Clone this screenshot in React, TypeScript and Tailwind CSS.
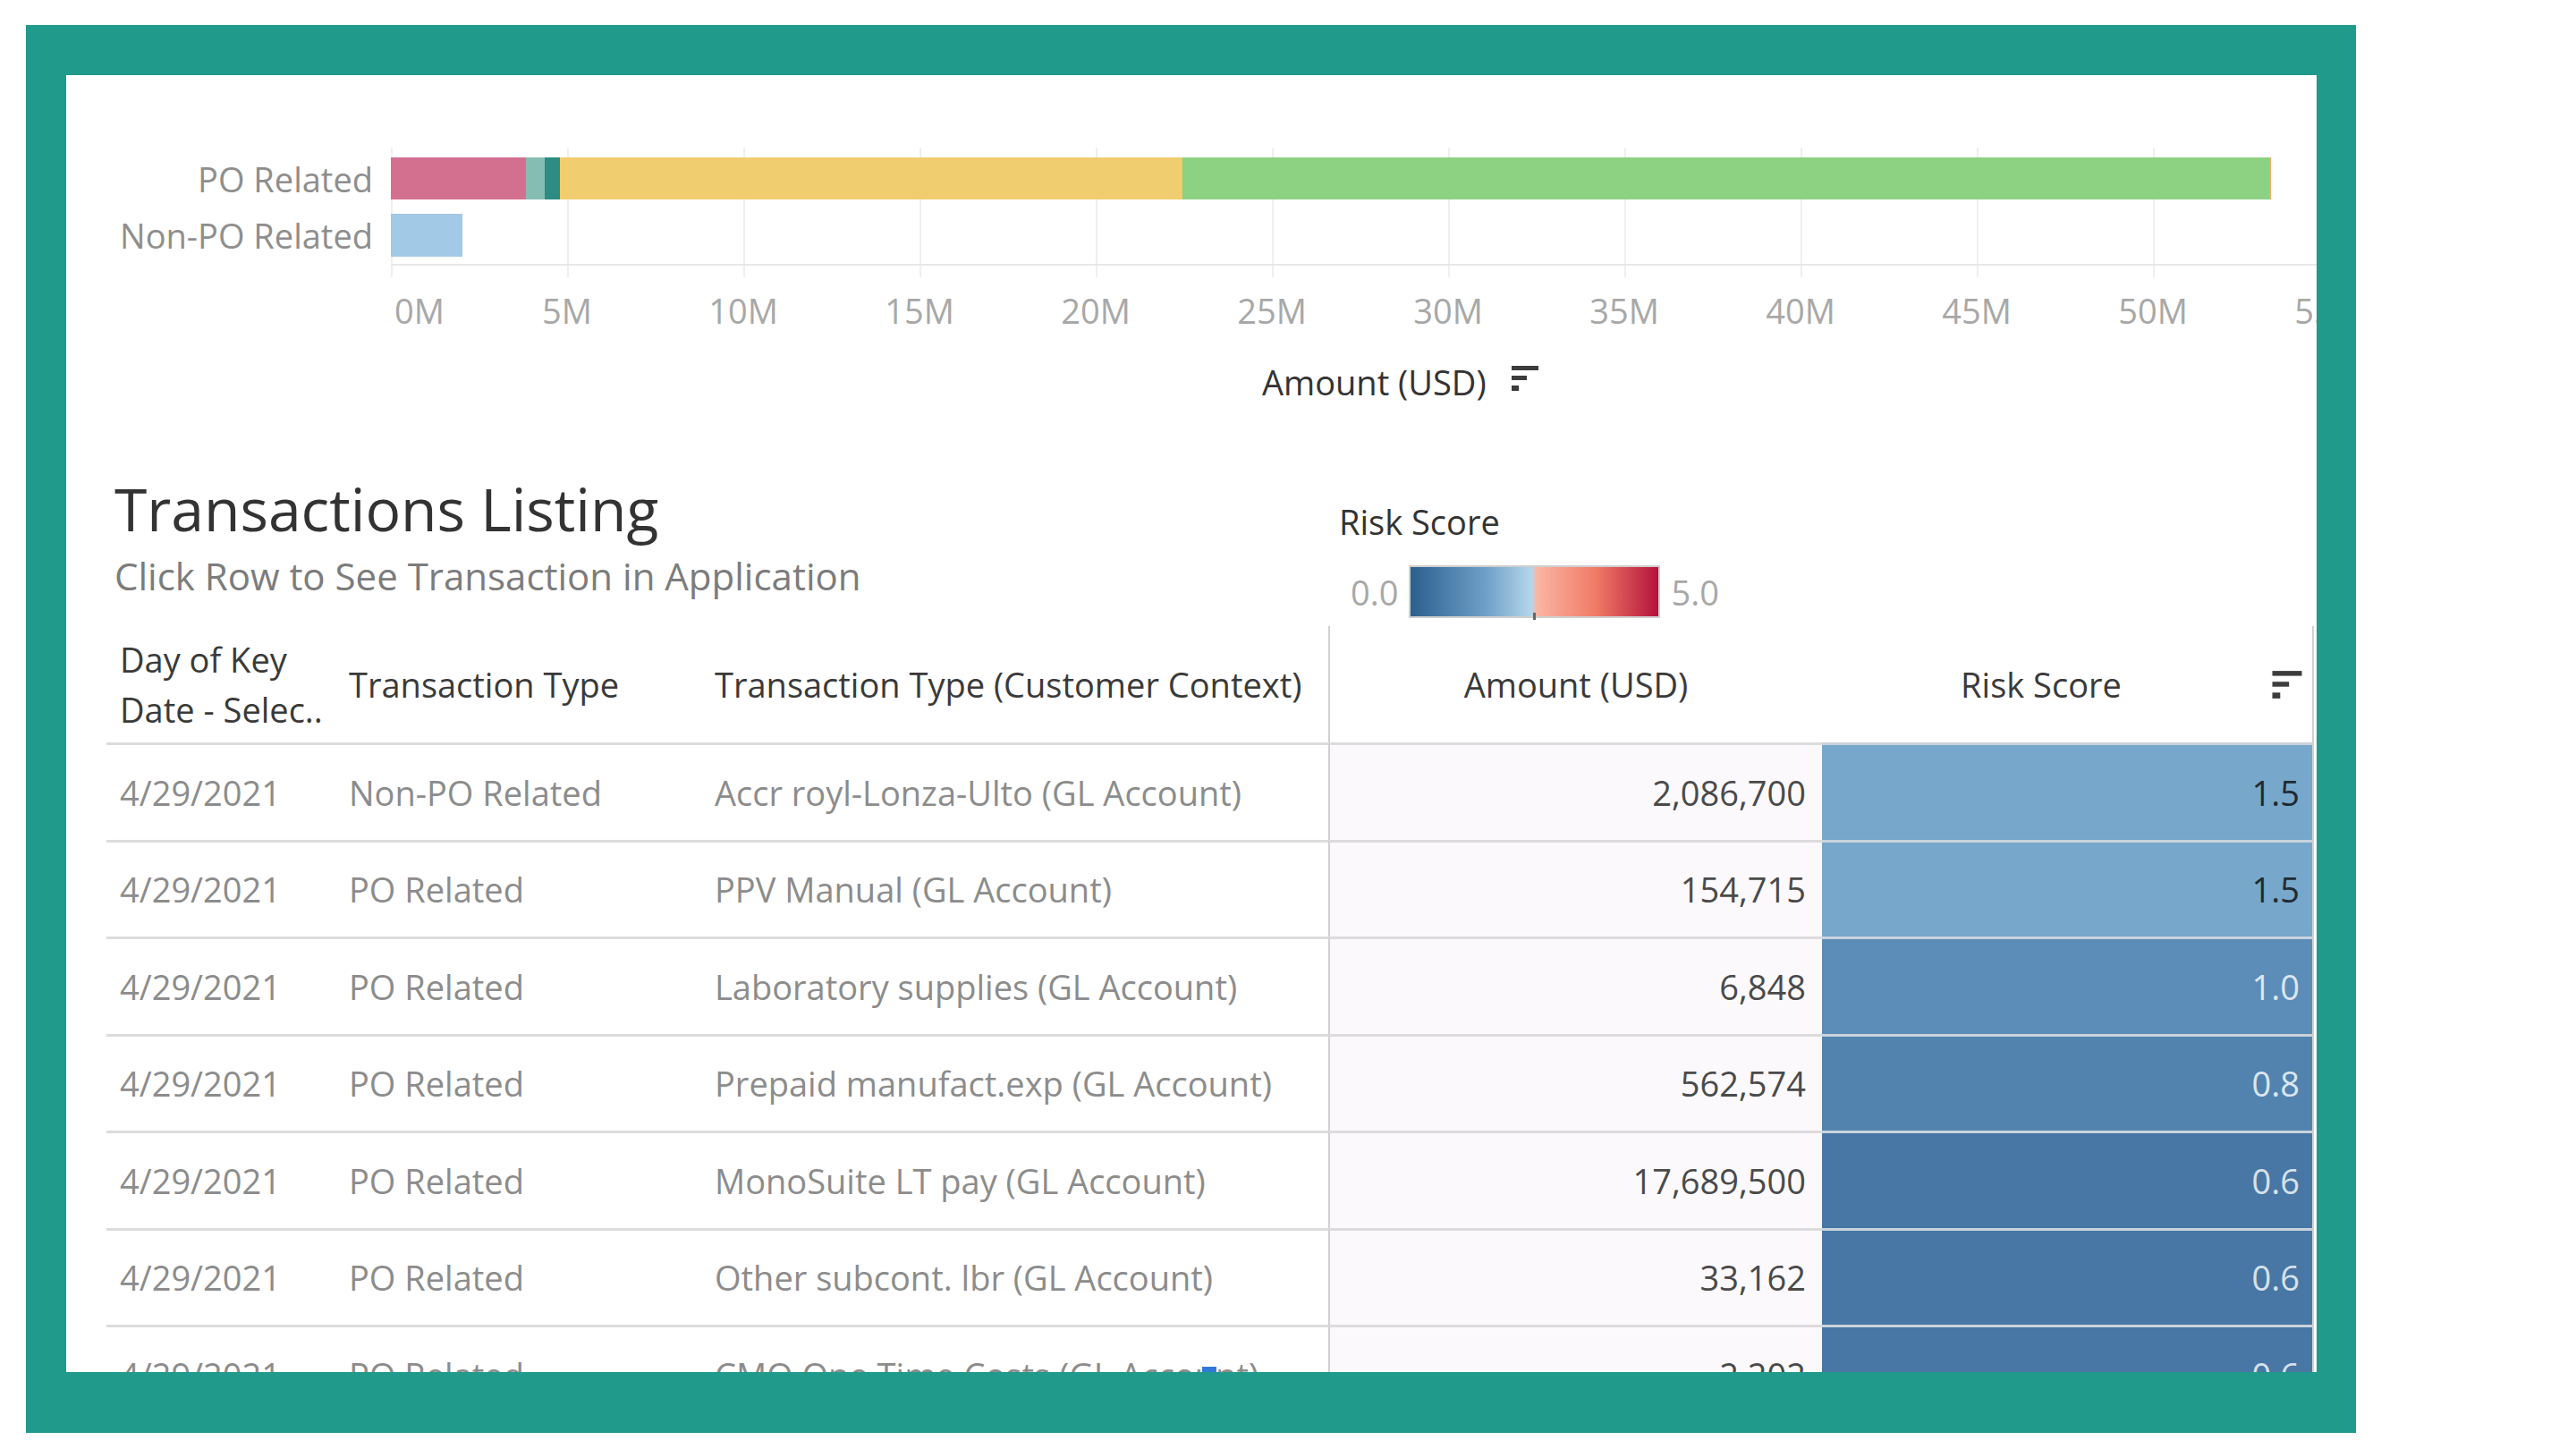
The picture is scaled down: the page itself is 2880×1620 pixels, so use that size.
import React from "react";

const ticks = ["0M", "5M", "10M", "15M", "20M", "25M", "30M", "35M", "40M", "45M", "50M", "55M"];
const STEP = 197;

const rows = [
  { date: "4/29/2021", type: "Non-PO Related", ctx: "Accr royl-Lonza-Ulto (GL Account)", amount: "2,086,700", risk: "1.5", cell: "bg-[#77a7cb] text-[#1f2a33]" },
  { date: "4/29/2021", type: "PO Related", ctx: "PPV Manual (GL Account)", amount: "154,715", risk: "1.5", cell: "bg-[#77a7cb] text-[#1f2a33]" },
  { date: "4/29/2021", type: "PO Related", ctx: "Laboratory supplies (GL Account)", amount: "6,848", risk: "1.0", cell: "bg-[#5c8cb8] text-[#dbe6ef]" },
  { date: "4/29/2021", type: "PO Related", ctx: "Prepaid manufact.exp (GL Account)", amount: "562,574", risk: "0.8", cell: "bg-[#5283af] text-[#dbe6ef]" },
  { date: "4/29/2021", type: "PO Related", ctx: "MonoSuite LT pay (GL Account)", amount: "17,689,500", risk: "0.6", cell: "bg-[#4877a5] text-[#d6e2ec]" },
  { date: "4/29/2021", type: "PO Related", ctx: "Other subcont. lbr (GL Account)", amount: "33,162", risk: "0.6", cell: "bg-[#4877a5] text-[#d6e2ec]" },
  { date: "4/29/2021", type: "PO Related", ctx: "CMO One Time Costs (GL Account)", amount: "2,202", risk: "0.6", cell: "bg-[#4877a5] text-[#d6e2ec]" },
];

function SortIcon({ className = "" }: { className?: string }) {
  return (
    <svg width="30" height="30" viewBox="0 0 30 30" className={className}>
      <rect x="0" y="1" width="30" height="5" fill="#3c3c3c" />
      <rect x="0" y="12" width="17" height="5" fill="#3c3c3c" />
      <rect x="0" y="23" width="8" height="6" fill="#3c3c3c" />
    </svg>
  );
}

function Chart() {
  return (
    <div className="flex h-[453px] shrink-0 flex-col pt-[81px]">
      <div className="flex">
        <div className="flex w-[363px] shrink-0 flex-col gap-[16px] pt-[11px] pr-[20px] text-[38px] leading-none text-[#8e8e8e]">
          <div className="flex h-[47px] items-center justify-end whitespace-nowrap">PO Related</div>
          <div className="flex h-[48px] items-center justify-end whitespace-nowrap">Non-PO Related</div>
        </div>
        <div className="relative h-[145px] w-[2153px] shrink-0">
          {ticks.map((t, i) => (
            <div
              key={t}
              className="absolute top-0 h-[145px] w-[2px] bg-[#efefef]"
              style={{ left: i * STEP }}
            />
          ))}
          <div className="absolute left-0 top-[130px] h-[2px] w-full bg-[#e8e8e8]" />
          <div className="relative flex flex-col gap-[16px] pt-[11px]">
            <div className="flex h-[47px]">
              <div className="w-[151px] bg-[#d4708f]" />
              <div className="w-[21px] bg-[#86bdb2]" />
              <div className="w-[17px] bg-[#2a8c83]" />
              <div className="w-[696px] bg-[#f0cd6e]" />
              <div className="w-[1215px] bg-[#8dd183]" />
              <div className="w-[2px] bg-[#f0b060]" />
            </div>
            <div className="flex h-[48px]">
              <div className="w-[80px] bg-[#a2c9e5]" />
            </div>
          </div>
        </div>
      </div>
      <div className="relative ml-[363px] mt-[18px] h-[38px] text-[38px] leading-none text-[#a8a8a8]">
        {ticks.map((t, i) => (
          <span
            key={t}
            className={i === 0 ? "absolute top-0" : "absolute top-0 -translate-x-1/2"}
            style={{ left: i === 0 ? 4 : i * STEP }}
          >
            {t}
          </span>
        ))}
      </div>
      <div className="mt-[42px] flex items-center gap-[28px] pl-[1337px] text-[38px] leading-none text-[#333]">
        <span>Amount (USD)</span>
        <SortIcon className="-mt-[8px]" />
      </div>
    </div>
  );
}

function ListingHead() {
  return (
    <div className="flex h-[163px] shrink-0 pl-[54px]">
      <div className="w-[1369px] shrink-0">
        <div className="-mt-[2px] text-[66px] leading-none text-[#333]">Transactions Listing</div>
        <div className="mt-[22px] text-[42px] leading-none text-[#7c7c7c]">
          Click Row to See Transaction in Application
        </div>
      </div>
      <div className="flex flex-col pt-[27px]">
        <div className="text-[38px] leading-none text-[#333]">Risk Score</div>
        <div className="mt-[30px] flex items-center gap-[12px] pl-[13px] text-[38px] leading-none text-[#a8a8a8]">
          <span>0.0</span>
          <div className="relative h-[59px] w-[281px] border-2 border-[#cfcfcf] bg-[linear-gradient(to_right,#2c5f8e,#6d9fc7_30%,#b6d6ea_49%,#fbb5a2_51%,#f07a66_75%,#b4123c)]">
            <div className="absolute -bottom-[4px] left-[137px] h-[8px] w-[3px] bg-[#666]" />
          </div>
          <span>5.0</span>
        </div>
      </div>
    </div>
  );
}

function Table() {
  const grid = "grid grid-cols-[256px_409px_701px_552px_548px]";
  return (
    <div className="ml-[45px] w-[2468px] shrink-0 border-r-2 border-[#d0d0d0]">
      <div className={`${grid} h-[130px] text-[38px] font-medium text-[#3a3a3a]`}>
        <div className="flex flex-col justify-center pl-[15px] leading-[56px]">
          <span>Day of Key</span>
          <span>Date - Selec..</span>
        </div>
        <div className="flex items-center pl-[15px] leading-none">Transaction Type</div>
        <div className="flex items-center whitespace-nowrap pl-[15px] leading-none">Transaction Type (Customer Context)</div>
        <div className="flex items-center justify-center border-l-2 border-[#d0d0d0] leading-none">Amount (USD)</div>
        <div className="flex items-center leading-none">
          <span className="flex-1 text-center">Risk Score</span>
          <SortIcon className="mr-[11px] ml-[13px] h-[33px] w-[34px]" />
        </div>
      </div>
      {rows.map((r, i) => (
        <div key={i} className={`${grid} relative h-[108.5px] text-[38px] leading-none`}>
          <div className="flex items-center border-t-[3px] border-[#dcdcdc] pl-[15px] text-[#8c8c8c]">{r.date}</div>
          <div className="flex items-center border-t-[3px] border-[#dcdcdc] pl-[15px] text-[#8c8c8c]">{r.type}</div>
          <div className="flex items-center whitespace-nowrap border-t-[3px] border-[#dcdcdc] pl-[15px] text-[#8c8c8c]">{r.ctx}</div>
          <div className="flex items-center justify-end border-l-2 border-t-[3px] border-[#dcdcdc] border-l-[#d0d0d0] bg-[#fcf9fc] pr-[18px] text-[#4a4a4a]">
            {r.amount}
          </div>
          <div className={`flex items-center justify-end border-t-[3px] border-[#c9d3dc] pr-[14px] ${r.cell}`}>{r.risk}</div>
          {i === rows.length - 1 && (
            <div className="absolute left-[1225px] top-[47px] h-[6px] w-[16px] bg-[#2f7ad8]" />
          )}
        </div>
      ))}
    </div>
  );
}

export default function App() {
  return (
    <div className="h-[1620px] w-[2880px] overflow-hidden bg-white pl-[29px] pt-[28px] font-['Open_Sans',sans-serif]">
      <div className="h-[1574px] w-[2605px] bg-[#1f9a8b] pl-[45px] pt-[56px]">
        <div className="flex h-[1450px] w-[2516px] flex-col overflow-hidden bg-white">
          <Chart />
          <ListingHead />
          <Table />
        </div>
      </div>
    </div>
  );
}
